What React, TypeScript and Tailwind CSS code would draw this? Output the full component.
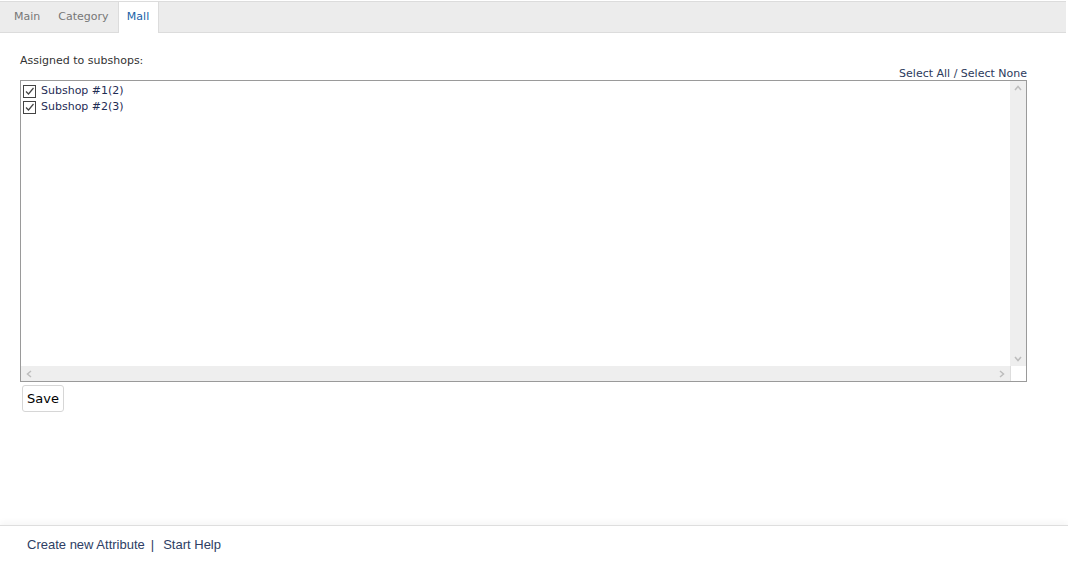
const tahoma = { fontFamily: '"DejaVu Sans", Verdana, sans-serif' };
const arial = { fontFamily: '"Liberation Sans", Arial, sans-serif' };

function Check() {
  return (
    <span className="inline-flex w-[13px] h-[13px] border border-[#444] bg-white items-center justify-center mr-[5px]">
      <svg width="11" height="11" viewBox="0 0 11 11">
        <path d="M2 5.5 L4.5 8 L9.5 2" fill="none" stroke="#444" strokeWidth="1.2" />
      </svg>
    </span>
  );
}

const items = ["Subshop #1(2)", "Subshop #2(3)"];

export default function App() {
  return (
    <div className="w-[1068px] h-[564px] bg-white flex flex-col text-[11px] text-[#333]" style={tahoma}>
      <div className="mt-[1px] h-[32px] bg-[#ececec] border-t border-b border-[#dcdcdc] flex items-stretch w-[1066px]">
        <div className="pl-[14px] pr-[8px] flex items-center text-[#777]">Main</div>
        <div className="pl-[10px] pr-[9px] flex items-center text-[#777]">Category</div>
        <div className="w-[41px] -mb-px bg-white border-l border-r border-[#dcdcdc] flex items-center justify-center text-[#1a5fa8]">
          Mall
        </div>
      </div>

      <div className="flex-1 px-[20px] pt-[20px]">
        <div className="w-[1007px] flex flex-col items-stretch">
          <div className="leading-[15px]">Assigned to subshops:</div>
          <div className="flex justify-end leading-[14px] -mt-px text-[#2c3a5c]">Select All / Select None</div>
          <div className="-mt-px h-[302px] border border-[#9a9a9a] flex flex-col">
            <div className="flex flex-1">
              <div className="flex-1 pt-[2px] pl-[2px]">
                {items.map((t) => (
                  <div key={t} className="flex items-center h-[16px] text-[#1f2d55]">
                    <Check />
                    {t}
                  </div>
                ))}
              </div>
              <div className="w-[16px] bg-[#eeeeee] flex flex-col justify-between items-center py-[4px]">
                <svg width="8" height="6" viewBox="0 0 8 6"><path d="M1 5 L4 1.5 L7 5" fill="none" stroke="#bdbdbd" strokeWidth="1.5" /></svg>
                <svg width="8" height="6" viewBox="0 0 8 6"><path d="M1 1 L4 4.5 L7 1" fill="none" stroke="#bdbdbd" strokeWidth="1.5" /></svg>
              </div>
            </div>
            <div className="flex h-[15px]">
              <div className="flex-1 bg-[#eeeeee] flex justify-between items-center px-[5px]">
                <svg width="6" height="8" viewBox="0 0 6 8"><path d="M5 1 L1.5 4 L5 7" fill="none" stroke="#bdbdbd" strokeWidth="1.5" /></svg>
                <svg width="6" height="8" viewBox="0 0 6 8"><path d="M1 1 L4.5 4 L1 7" fill="none" stroke="#bdbdbd" strokeWidth="1.5" /></svg>
              </div>
              <div className="w-[16px] bg-white border-l border-[#ddd]"></div>
            </div>
          </div>
          <div className="flex mt-[3px] ml-[2px]">
            <button className="h-[27px] px-[4px] bg-white border border-[#d6d6d6] rounded-[3px] text-[13px] text-black">
              Save
            </button>
          </div>
        </div>
      </div>

      <div className="h-[39px] border-t border-[#dedede] shadow-[0_-3px_6px_rgba(0,0,0,0.04)] flex items-center pl-[27px] text-[13px] text-[#2e3e64]" style={arial}>
        <span>Create new Attribute</span>
        <span className="mx-[6px]">|</span>
        <span className="ml-[3px]">Start Help</span>
      </div>
    </div>
  );
}
